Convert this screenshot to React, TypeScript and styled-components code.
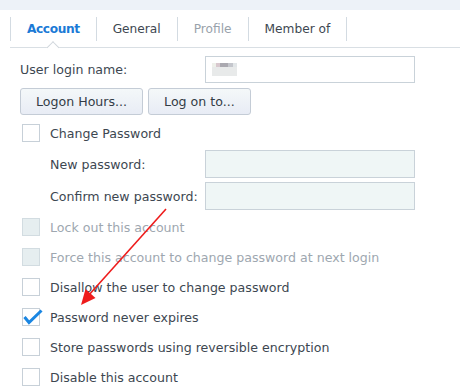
import React from 'react';
import styled, {createGlobalStyle} from 'styled-components';

const GlobalStyle = createGlobalStyle`
    html, body {
        margin: 0;
        padding: 0;
        background: #fff;
    }
    body {
        font-family: 'DejaVu Sans', Verdana, sans-serif;
        font-size: 12.6px;
        color: #3d4751;
    }
`;

const Page = styled.div`
    position: relative;
    width: 460px;
    height: 391px;
    overflow: hidden;
`;

const TopStrip = styled.div`
    height: 10px;
    background: #edf2f8;
`;

const TabBar = styled.div`
    display: flex;
    margin: 7px 0 0 10px;
    padding-bottom: 6px;
    border-bottom: 1px solid #d9dfe4;
`;

const Tab = styled.div<{active?: boolean; disabled?: boolean}>`
    position: relative;
    display: flex;
    align-items: center;
    height: 24px;
    padding: 0 16px;
    border-right: 1px solid #d3dbe2;
    font-size: 12.2px;
    font-weight: ${props => (props.active ? 'bold' : 'normal')};
    letter-spacing: ${props => (props.active ? '-0.4px' : '0')};
    color: ${props => (props.active ? '#1b7ad6' : props.disabled ? '#99a2ab' : '#3d4751')};
    &:first-child {
        border-left: 1px solid #d3dbe2;
    }
    &::after {
        content: '';
        display: ${props => (props.active ? 'block' : 'none')};
        position: absolute;
        top: 26px;
        left: 50%;
        width: 8px;
        height: 8px;
        background: #fff;
        border-top: 1px solid #d0d6dc;
        border-left: 1px solid #d0d6dc;
        transform: translateX(-50%) rotate(45deg);
    }
`;

const Form = styled.div`
    padding: 8px 0 0 20px;
`;

const FieldRow = styled.div<{indent?: number; labelWidth: number}>`
    display: grid;
    grid-template-columns: ${props => props.labelWidth}px 210px;
    align-items: center;
    margin-left: ${props => props.indent ?? 0}px;
`;

const Label = styled.span`
    white-space: nowrap;
`;

const TextInput = styled.div<{disabled?: boolean; h: number}>`
    box-sizing: border-box;
    display: flex;
    align-items: center;
    height: ${props => props.h}px;
    padding-left: 6px;
    border: 1px solid #c9d2d9;
    background: ${props => (props.disabled ? '#eff6f6' : '#fff')};
`;

const Redacted = styled.span`
    display: inline-block;
    width: 25px;
    height: 13px;
    background:
        linear-gradient(90deg, #eef0ea 0 4px, #d8c8ce 4px 8px, #aaa9b0 8px 16px, #c4c6cc 16px 21px, #e2e6e8 21px),
        #e8eaea;
    background-size: 100% 4px, 100% 100%;
    background-repeat: no-repeat;
    filter: blur(0.6px);
`;

const ButtonRow = styled.div`
    display: flex;
    gap: 5px;
    margin: 5px 0 3px;
`;

const Button = styled.button`
    box-sizing: border-box;
    height: 27px;
    padding: 0 15px;
    border: 1px solid #c4ccd6;
    border-radius: 3px;
    background: linear-gradient(#f4f8f9, #e8ecf5);
    font-family: 'DejaVu Sans', Verdana, sans-serif;
    font-size: 12.6px;
    color: #333c46;
`;

const CheckRow = styled.div<{disabled?: boolean}>`
    display: flex;
    align-items: center;
    gap: 10px;
    height: 30px;
    padding-left: 2px;
    color: ${props => (props.disabled ? '#9ea7b0' : '#3d4751')};
`;

const Box = styled.span<{disabled?: boolean}>`
    position: relative;
    box-sizing: border-box;
    flex: none;
    width: 18px;
    height: 18px;
    border: 1px solid ${props => (props.disabled ? '#d2dce1' : '#c7d0d8')};
    background: ${props => (props.disabled ? '#e6eef0' : '#fff')};
    svg {
        position: absolute;
        left: -1px;
        top: -1px;
        overflow: visible;
    }
`;

const PasswordBlock = styled.div`
    display: grid;
    gap: 4px;
    margin: 2px 0;
`;

const ArrowLayer = styled.svg`
    position: absolute;
    left: 0;
    top: 0;
    pointer-events: none;
`;

const Check = ({label, checked, disabled}: {label: string; checked?: boolean; disabled?: boolean}) => (
    <CheckRow disabled={disabled}>
        <Box disabled={disabled}>
            {checked && (
                <svg width="18" height="18" viewBox="0 0 18 18">
                    <path d="M2.5 9 L7 14.5 L19.5 2.5" fill="none" stroke="#1a86e2" strokeWidth="3" strokeLinejoin="miter" />
                </svg>
            )}
        </Box>
        <span>{label}</span>
    </CheckRow>
);

export default function App() {
    return (
        <Page>
            <GlobalStyle />
            <TopStrip />
            <TabBar>
                <Tab active>Account</Tab>
                <Tab>General</Tab>
                <Tab disabled>Profile</Tab>
                <Tab>Member of</Tab>
            </TabBar>
            <Form>
                <FieldRow labelWidth={185}>
                    <Label>User login name:</Label>
                    <TextInput h={27}>
                        <Redacted />
                    </TextInput>
                </FieldRow>
                <ButtonRow>
                    <Button>Logon Hours...</Button>
                    <Button>Log on to...</Button>
                </ButtonRow>
                <Check label="Change Password" />
                <PasswordBlock>
                    <FieldRow indent={30} labelWidth={155}>
                        <Label>New password:</Label>
                        <TextInput h={28} disabled />
                    </FieldRow>
                    <FieldRow indent={30} labelWidth={155}>
                        <Label>Confirm new password:</Label>
                        <TextInput h={28} disabled />
                    </FieldRow>
                </PasswordBlock>
                <Check label="Lock out this account" disabled />
                <Check label="Force this account to change password at next login" disabled />
                <Check label="Disallow the user to change password" />
                <Check label="Password never expires" checked />
                <Check label="Store passwords using reversible encryption" />
                <Check label="Disable this account" />
            </Form>
            <ArrowLayer width="460" height="391" viewBox="0 0 460 391">
                <line x1="166" y1="209" x2="88" y2="296" stroke="#ee1c1c" strokeWidth="1.6" />
                <polygon points="81,305 85.5,289 95.5,298" fill="#ee1c1c" />
            </ArrowLayer>
        </Page>
    );
}
